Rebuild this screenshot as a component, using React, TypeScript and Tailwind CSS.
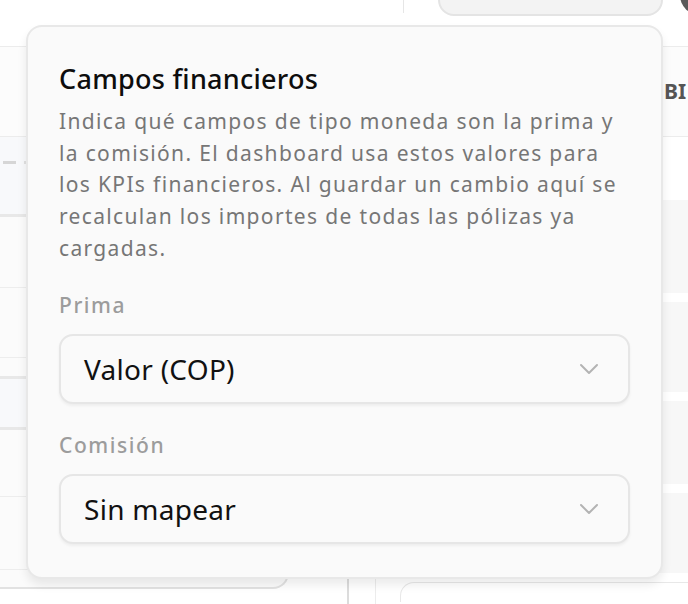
import React from "react";
import { ChevronDown } from "lucide-react";

function SelectBox({ value }: { value: string }) {
  return (
    <div className="flex h-[70px] items-center justify-between rounded-[14px] border-2 border-[#e6e6e6] bg-[#fafafa] pl-[23px] pr-[23px] shadow-[0_2px_3px_rgba(0,0,0,0.05)]">
      <span className="text-[28px] leading-none tracking-[0.01em] text-[#111111]">{value}</span>
      <ChevronDown className="h-[32px] w-[32px] text-[#b3b3b3]" strokeWidth={1.5} />
    </div>
  );
}

export default function App() {
  return (
    <div
      className="relative h-[604px] w-[688px] overflow-hidden bg-white"
      style={{ fontFamily: "'Noto Sans', Lato, sans-serif" }}
    >
      {/* Background page */}
      <div className="flex h-full flex-col">
        {/* top header */}
        <div className="flex h-[47px] shrink-0 items-start border-b border-[#ececec]">
          <div className="h-[13px] w-[404px] shrink-0 border-r border-[#e6e6e6]" />
          <div className="-mt-[30px] ml-[34px] h-[46px] w-[225px] shrink-0 rounded-[16px] border-2 border-[#e4e4e4] bg-[#f3f3f3]" />
          <div className="-mt-[25px] ml-[17px] h-[40px] w-[40px] shrink-0 rounded-full bg-[#5a5a5a]" />
        </div>
        {/* secondary bar */}
        <div className="flex h-[90px] shrink-0 items-center border-b border-[#ececec] bg-[#fcfcfc] pl-[664px]">
          <span className="whitespace-nowrap text-[21px] font-bold leading-none text-[#555]">BI</span>
        </div>
        {/* content */}
        <div className="flex flex-1">
          {/* left table */}
          <div className="flex w-[349px] shrink-0 flex-col border-r-2 border-[#dcdcdc]">
            <div className="flex h-[80px] items-center gap-[8px] border-b-[3px] border-[#e8e8e8] bg-[#f8f9fb] pb-[26px] pl-[3px]">
              <div className="h-[3px] w-[13px] bg-[#d6d6d6]" />
              <div className="h-[3px] w-[6px] bg-[#e0e0e0]" />
            </div>
            <div className="h-[71px] border-b border-[#ededed] bg-[#fbfbfb]" />
            <div className="h-[70px] border-b border-[#ededed] bg-[#fbfbfb]" />
            <div className="h-[18px] bg-[#fbfbfb]" />
            <div className="h-[54px] border-y-[3px] border-[#e8e8e8] bg-[#f8f9fb]" />
            <div className="h-[67px] border-b border-[#ededed] bg-[#fbfbfb]" />
            <div className="h-[73px] border-b border-[#ededed] bg-[#fbfbfb]" />
            <div className="mr-[58px] h-[19px] rounded-br-[16px] border-b-2 border-r-2 border-[#e2e2e2] bg-[#fbfbfb]" />
          </div>
          <div className="w-[27px] shrink-0 border-r border-[#ececec]" />
          {/* right column */}
          <div className="flex flex-1 flex-col gap-[9px] pt-[63px]">
            <div className="h-[93px] bg-[#f7f7f7]" />
            <div className="h-[90px] bg-[#f7f7f7]" />
            <div className="h-[83px] bg-[#f7f7f7]" />
            <div className="h-[80px] bg-[#f7f7f7]" />
            <div className="ml-[24px] h-[20px] rounded-tl-[14px] border-l border-t border-[#e8e8e8] bg-white" />
          </div>
        </div>
      </div>

      {/* Dialog card */}
      <div className="absolute left-[26px] top-[25px] flex h-[554px] w-[637px] flex-col rounded-[16px] border-2 border-[#e8e8e8] bg-[#fafafa] px-[31px] pt-[35px] shadow-[0_6px_10px_rgba(0,0,0,0.08)]">
        <h2 className="text-[27px] font-medium leading-[34px] tracking-[0.01em] text-[#0d0d0d]">Campos financieros</h2>
        <p className="mt-[10px] text-[21px] leading-[31.7px] tracking-[0.064em] text-[#767676]">
          Indica qué campos de tipo moneda son la prima y la comisión. El dashboard usa estos valores para los KPIs
          financieros. Al guardar un cambio aquí se recalculan los importes de todas las pólizas ya cargadas.
        </p>
        <div className="mt-[25px] text-[21px] font-medium leading-[30px] tracking-[0.075em] text-[#9c9c9c]">Prima</div>
        <div className="mt-[14px]">
          <SelectBox value="Valor (COP)" />
        </div>
        <div className="mt-[26px] text-[21px] font-medium leading-[30px] tracking-[0.075em] text-[#9c9c9c]">Comisión</div>
        <div className="mt-[14px]">
          <SelectBox value="Sin mapear" />
        </div>
      </div>
    </div>
  );
}
